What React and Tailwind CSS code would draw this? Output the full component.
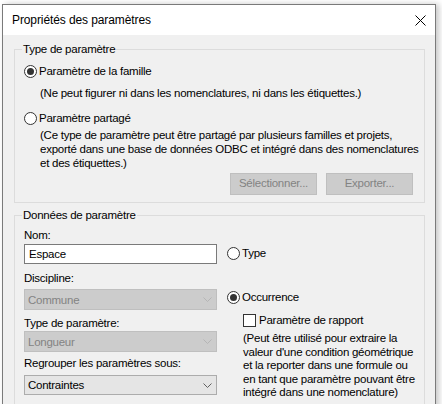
import React from 'react';

const font = { fontFamily: '"Liberation Sans", Arial, sans-serif' };

const RadioDot = ({ checked }) => (
  <svg width="13" height="13" viewBox="0 0 13 13" className="shrink-0">
    <circle cx="6.5" cy="6.5" r="6" fill="#ffffff" stroke="#333333" strokeWidth="1" />
    {checked && <circle cx="6.5" cy="6.5" r="3.5" fill="#333333" />}
  </svg>
);

const Radio = ({ checked, label, className = '' }) => (
  <div className={`flex items-center gap-[2px] h-[16px] ${className}`}>
    <RadioDot checked={checked} />
    <span className="leading-[16px]">{label}</span>
  </div>
);

const Chevron = ({ color }) => (
  <svg width="9" height="5" viewBox="0 0 9 5" className="shrink-0">
    <polyline points="0.5,0.5 4.5,4.5 8.5,0.5" fill="none" stroke={color} strokeWidth="1" />
  </svg>
);

// Windows-style dropdown list
const Select = ({ value, disabled, className = '' }) => (
  <div
    className={`flex items-center justify-between pl-[3px] pr-[4px] border ${
      disabled
        ? 'bg-[#cccccc] border-[#bfbfbf] text-[#838383]'
        : 'bg-[#e5e5e5] border-[#acacac] text-black'
    } ${className}`}
  >
    <span className="leading-[16px]">{value}</span>
    <Chevron color={disabled ? '#b5b5b5' : '#606060'} />
  </div>
);

const GroupBox = ({ title, className = '', children }) => (
  <fieldset className={`border border-[#dcdcdc] ml-[11px] w-[411px] min-w-0 ${className}`}>
    <legend className="ml-[7px] px-[1px] leading-[16px]">{title}</legend>
    {children}
  </fieldset>
);

const DisabledButton = ({ label }) => (
  <div className="w-[87px] h-[22px] flex items-center justify-center bg-[#cccccc] border border-[#bfbfbf] text-[#838383]">
    {label}
  </div>
);

export default function App() {
  return (
    <div className="w-[442px] h-[404px] overflow-hidden bg-white text-[11.5px] tracking-[-0.25px] text-black" style={font}>
      <div className="ml-[2px] mt-[4px] w-[434px] h-[420px] border border-[#7a7a7a] bg-[#f0f0f0] shadow-[3px_0_6px_rgba(0,0,0,0.22)]">
        {/* Title bar */}
        <div className="h-[30px] bg-white flex items-center justify-between pl-[9px] pr-[9px]">
          <span className="leading-[16px] text-[12px] tracking-[-0.1px]">Propriétés des paramètres</span>
          <svg width="11" height="11" viewBox="0 0 11 11">
            <line x1="0.5" y1="0.5" x2="10.5" y2="10.5" stroke="#000" strokeWidth="1" />
            <line x1="10.5" y1="0.5" x2="0.5" y2="10.5" stroke="#000" strokeWidth="1" />
          </svg>
        </div>

        {/* Type de paramètre */}
        <GroupBox title="Type de paramètre" className="mt-[6px]">
          <div className="px-[9px] pt-[6px] pb-[7px]">
            <Radio checked label="Paramètre de la famille" />
            <p className="mt-[6px] pl-[16px] leading-[16px] whitespace-nowrap">
              (Ne peut figurer ni dans les nomenclatures, ni dans les étiquettes.)
            </p>
            <Radio className="mt-[9px]" label="Paramètre partagé" />
            <p className="mt-[2px] pl-[16px] leading-[14px] whitespace-nowrap">
              (Ce type de paramètre peut être partagé par plusieurs familles et projets,
              <br />
              exporté dans une base de données ODBC et intégré dans des nomenclatures
              <br />
              et des étiquettes.)
            </p>
            <div className="mt-[3px] flex justify-end gap-[9px] pr-[2px]">
              <DisabledButton label="Sélectionner..." />
              <DisabledButton label="Exporter..." />
            </div>
          </div>
        </GroupBox>

        {/* Données de paramètre */}
        <GroupBox title="Données de paramètre" className="mt-[4px]">
          <div className="px-[9px] pt-[4px] pb-[10px] flex gap-[10px]">
            <div className="w-[193px] shrink-0">
              <div className="leading-[16px]">Nom:</div>
              <div className="mt-[1px] h-[20px] border border-[#7a7a7a] bg-white px-[4px] flex items-center">
                <span className="leading-[16px]">Espace</span>
              </div>
              <div className="mt-[6px] leading-[16px]">Discipline:</div>
              <Select value="Commune" disabled className="mt-[3px] h-[21px]" />
              <div className="mt-[5px] leading-[16px]">Type de paramètre:</div>
              <Select value="Longueur" disabled className="h-[21px]" />
              <div className="mt-[3px] leading-[16px]">Regrouper les paramètres sous:</div>
              <Select value="Contraintes" className="mt-[4px] h-[20px]" />
            </div>

            <div className="flex-1">
              <Radio className="mt-[18px]" label="Type" />
              <Radio checked className="mt-[28px]" label="Occurrence" />
              <div className="mt-[7px] pl-[16px] h-[16px] flex items-center gap-[3px]">
                <span className="w-[13px] h-[13px] border border-[#333333] bg-white shrink-0" />
                <span className="leading-[16px]">Paramètre de rapport</span>
              </div>
              <p className="mt-[4px] pl-[16px] leading-[13.5px] whitespace-nowrap">
                (Peut être utilisé pour extraire la
                <br />
                valeur d'une condition géométrique
                <br />
                et la reporter dans une formule ou
                <br />
                en tant que paramètre pouvant être
                <br />
                intégré dans une nomenclature)
              </p>
            </div>
          </div>
        </GroupBox>
      </div>
    </div>
  );
}
